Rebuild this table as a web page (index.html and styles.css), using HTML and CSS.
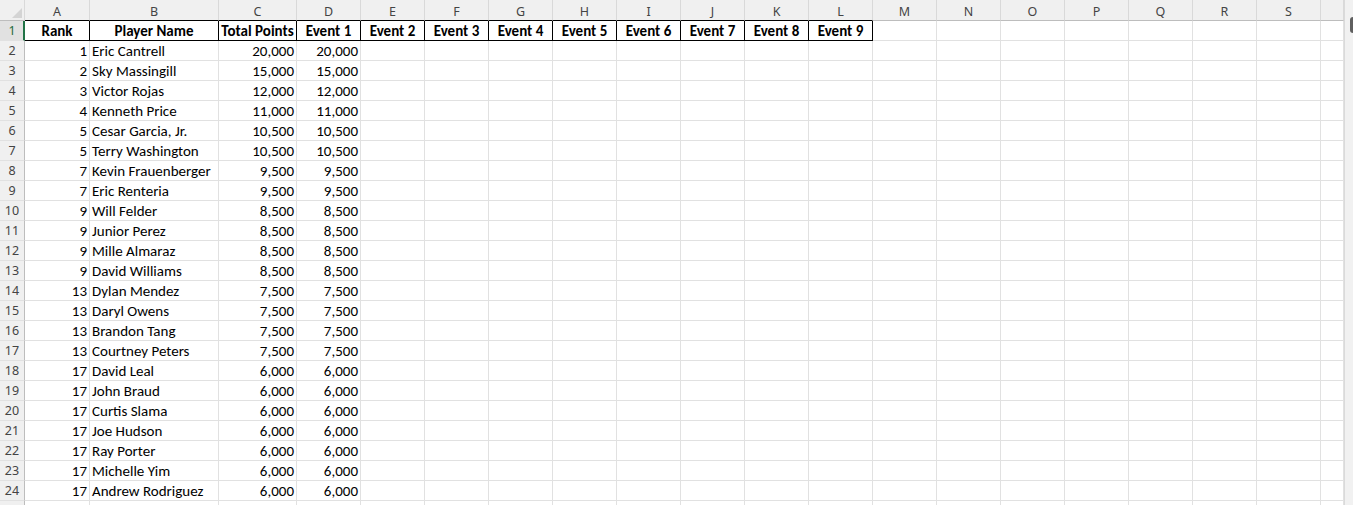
FILE: index.html
```html
<!DOCTYPE html>
<html>
<head>
<meta charset="utf-8">
<link rel="stylesheet" href="styles.css">
</head>
<body>
<div class="app">
  <div class="sheet">
    <div class="row hdr">
      <div class="corner"><svg width="12" height="12" viewBox="0 0 12 12"><polygon points="11,1 11,11 1,11" fill="#d4d4d4"/></svg></div>
      <div class="ch b1">A</div><div class="ch b1">B</div><div class="ch b1">C</div><div class="ch b1">D</div><div class="ch b1">E</div><div class="ch b1">F</div><div class="ch b1">G</div><div class="ch b1">H</div><div class="ch b1">I</div><div class="ch b1">J</div><div class="ch b1">K</div><div class="ch b1">L</div><div class="ch">M</div><div class="ch">N</div><div class="ch">O</div><div class="ch">P</div><div class="ch">Q</div><div class="ch">R</div><div class="ch">S</div><div class="ch"></div>
    </div>
    <div class="row">
      <div class="rh sel">1</div>
      <div class="c th">Rank</div><div class="c th">Player Name</div><div class="c th">Total Points</div><div class="c th">Event 1</div><div class="c th">Event 2</div><div class="c th">Event 3</div><div class="c th">Event 4</div><div class="c th">Event 5</div><div class="c th">Event 6</div><div class="c th">Event 7</div><div class="c th">Event 8</div><div class="c th">Event 9</div><i></i><i></i><i></i><i></i><i></i><i></i><i></i><i></i>
    </div>
    <div class="row"><div class="rh">2</div><div class="c n">1</div><div class="c">Eric Cantrell</div><div class="c n">20,000</div><div class="c n">20,000</div><i></i><i></i><i></i><i></i><i></i><i></i><i></i><i></i><i></i><i></i><i></i><i></i><i></i><i></i><i></i><i></i></div>
    <div class="row"><div class="rh">3</div><div class="c n">2</div><div class="c">Sky Massingill</div><div class="c n">15,000</div><div class="c n">15,000</div><i></i><i></i><i></i><i></i><i></i><i></i><i></i><i></i><i></i><i></i><i></i><i></i><i></i><i></i><i></i><i></i></div>
    <div class="row"><div class="rh">4</div><div class="c n">3</div><div class="c">Victor Rojas</div><div class="c n">12,000</div><div class="c n">12,000</div><i></i><i></i><i></i><i></i><i></i><i></i><i></i><i></i><i></i><i></i><i></i><i></i><i></i><i></i><i></i><i></i></div>
    <div class="row"><div class="rh">5</div><div class="c n">4</div><div class="c">Kenneth Price</div><div class="c n">11,000</div><div class="c n">11,000</div><i></i><i></i><i></i><i></i><i></i><i></i><i></i><i></i><i></i><i></i><i></i><i></i><i></i><i></i><i></i><i></i></div>
    <div class="row"><div class="rh">6</div><div class="c n">5</div><div class="c">Cesar Garcia, Jr.</div><div class="c n">10,500</div><div class="c n">10,500</div><i></i><i></i><i></i><i></i><i></i><i></i><i></i><i></i><i></i><i></i><i></i><i></i><i></i><i></i><i></i><i></i></div>
    <div class="row"><div class="rh">7</div><div class="c n">5</div><div class="c">Terry Washington</div><div class="c n">10,500</div><div class="c n">10,500</div><i></i><i></i><i></i><i></i><i></i><i></i><i></i><i></i><i></i><i></i><i></i><i></i><i></i><i></i><i></i><i></i></div>
    <div class="row"><div class="rh">8</div><div class="c n">7</div><div class="c">Kevin Frauenberger</div><div class="c n">9,500</div><div class="c n">9,500</div><i></i><i></i><i></i><i></i><i></i><i></i><i></i><i></i><i></i><i></i><i></i><i></i><i></i><i></i><i></i><i></i></div>
    <div class="row"><div class="rh">9</div><div class="c n">7</div><div class="c">Eric Renteria</div><div class="c n">9,500</div><div class="c n">9,500</div><i></i><i></i><i></i><i></i><i></i><i></i><i></i><i></i><i></i><i></i><i></i><i></i><i></i><i></i><i></i><i></i></div>
    <div class="row"><div class="rh">10</div><div class="c n">9</div><div class="c">Will Felder</div><div class="c n">8,500</div><div class="c n">8,500</div><i></i><i></i><i></i><i></i><i></i><i></i><i></i><i></i><i></i><i></i><i></i><i></i><i></i><i></i><i></i><i></i></div>
    <div class="row"><div class="rh">11</div><div class="c n">9</div><div class="c">Junior Perez</div><div class="c n">8,500</div><div class="c n">8,500</div><i></i><i></i><i></i><i></i><i></i><i></i><i></i><i></i><i></i><i></i><i></i><i></i><i></i><i></i><i></i><i></i></div>
    <div class="row"><div class="rh">12</div><div class="c n">9</div><div class="c">Mille Almaraz</div><div class="c n">8,500</div><div class="c n">8,500</div><i></i><i></i><i></i><i></i><i></i><i></i><i></i><i></i><i></i><i></i><i></i><i></i><i></i><i></i><i></i><i></i></div>
    <div class="row"><div class="rh">13</div><div class="c n">9</div><div class="c">David Williams</div><div class="c n">8,500</div><div class="c n">8,500</div><i></i><i></i><i></i><i></i><i></i><i></i><i></i><i></i><i></i><i></i><i></i><i></i><i></i><i></i><i></i><i></i></div>
    <div class="row"><div class="rh">14</div><div class="c n">13</div><div class="c">Dylan Mendez</div><div class="c n">7,500</div><div class="c n">7,500</div><i></i><i></i><i></i><i></i><i></i><i></i><i></i><i></i><i></i><i></i><i></i><i></i><i></i><i></i><i></i><i></i></div>
    <div class="row"><div class="rh">15</div><div class="c n">13</div><div class="c">Daryl Owens</div><div class="c n">7,500</div><div class="c n">7,500</div><i></i><i></i><i></i><i></i><i></i><i></i><i></i><i></i><i></i><i></i><i></i><i></i><i></i><i></i><i></i><i></i></div>
    <div class="row"><div class="rh">16</div><div class="c n">13</div><div class="c">Brandon Tang</div><div class="c n">7,500</div><div class="c n">7,500</div><i></i><i></i><i></i><i></i><i></i><i></i><i></i><i></i><i></i><i></i><i></i><i></i><i></i><i></i><i></i><i></i></div>
    <div class="row"><div class="rh">17</div><div class="c n">13</div><div class="c">Courtney Peters</div><div class="c n">7,500</div><div class="c n">7,500</div><i></i><i></i><i></i><i></i><i></i><i></i><i></i><i></i><i></i><i></i><i></i><i></i><i></i><i></i><i></i><i></i></div>
    <div class="row"><div class="rh">18</div><div class="c n">17</div><div class="c">David Leal</div><div class="c n">6,000</div><div class="c n">6,000</div><i></i><i></i><i></i><i></i><i></i><i></i><i></i><i></i><i></i><i></i><i></i><i></i><i></i><i></i><i></i><i></i></div>
    <div class="row"><div class="rh">19</div><div class="c n">17</div><div class="c">John Braud</div><div class="c n">6,000</div><div class="c n">6,000</div><i></i><i></i><i></i><i></i><i></i><i></i><i></i><i></i><i></i><i></i><i></i><i></i><i></i><i></i><i></i><i></i></div>
    <div class="row"><div class="rh">20</div><div class="c n">17</div><div class="c">Curtis Slama</div><div class="c n">6,000</div><div class="c n">6,000</div><i></i><i></i><i></i><i></i><i></i><i></i><i></i><i></i><i></i><i></i><i></i><i></i><i></i><i></i><i></i><i></i></div>
    <div class="row"><div class="rh">21</div><div class="c n">17</div><div class="c">Joe Hudson</div><div class="c n">6,000</div><div class="c n">6,000</div><i></i><i></i><i></i><i></i><i></i><i></i><i></i><i></i><i></i><i></i><i></i><i></i><i></i><i></i><i></i><i></i></div>
    <div class="row"><div class="rh">22</div><div class="c n">17</div><div class="c">Ray Porter</div><div class="c n">6,000</div><div class="c n">6,000</div><i></i><i></i><i></i><i></i><i></i><i></i><i></i><i></i><i></i><i></i><i></i><i></i><i></i><i></i><i></i><i></i></div>
    <div class="row"><div class="rh">23</div><div class="c n">17</div><div class="c">Michelle Yim</div><div class="c n">6,000</div><div class="c n">6,000</div><i></i><i></i><i></i><i></i><i></i><i></i><i></i><i></i><i></i><i></i><i></i><i></i><i></i><i></i><i></i><i></i></div>
    <div class="row"><div class="rh">24</div><div class="c n">17</div><div class="c">Andrew Rodriguez</div><div class="c n">6,000</div><div class="c n">6,000</div><i></i><i></i><i></i><i></i><i></i><i></i><i></i><i></i><i></i><i></i><i></i><i></i><i></i><i></i><i></i><i></i></div>
    <div class="row"><div class="rh"></div><div class="c"></div><div class="c"></div><div class="c"></div><div class="c"></div><i></i><i></i><i></i><i></i><i></i><i></i><i></i><i></i><i></i><i></i><i></i><i></i><i></i><i></i><i></i><i></i></div>
  </div>
  <div class="vscroll"><div class="thumb"></div></div>
</div>
</body>
</html>
```
FILE: styles.css
```css
html, body {
  margin: 0;
  padding: 0;
  background: #ffffff;
  overflow: hidden;
}
body {
  font-family: Carlito, Calibri, Lato, "Liberation Sans", sans-serif;
  font-size: 15px;
  color: #000;
}
.app {
  display: flex;
  height: 505px;
  overflow: hidden;
}
.sheet {
  width: 1344px;
  flex: none;
}
.row {
  display: grid;
  grid-template-columns: 25px 65px 129px 78px repeat(16, 64px) 23px;
  height: 20px;
}
.row > * {
  box-sizing: border-box;
  border-right: 1px solid #e1e1e1;
  border-bottom: 1px solid #e1e1e1;
  overflow: hidden;
  white-space: nowrap;
}
.row.hdr {
  height: 21px;
  background: #f0f0f0;
}
.row.hdr > * {
  border-right: 1px solid #d9d9d9;
  border-bottom: 1px solid #bdbdbd;
}
.corner {
  display: flex;
  align-items: flex-end;
  justify-content: flex-end;
}
.corner svg {
  display: block;
  margin: 0 1px 1px 0;
}
.ch {
  font-family: "Noto Sans", "Open Sans", sans-serif;
  font-size: 12.5px;
  color: #444;
  text-align: center;
  line-height: 20px;
  padding-top: 2px;
}
.row.hdr > .b1 {
  border-bottom-color: #000;
}
.rh {
  background: #f0f0f0;
  font-family: "Noto Sans", "Open Sans", sans-serif;
  font-size: 12.5px;
  color: #444;
  text-align: center;
  line-height: 20px;
  border-right-color: #bdbdbd !important;
}
.rh.sel {
  background: #e1e1e1;
  color: #1e6b3f;
  border-right: 2px solid #217346 !important;
  padding-left: 1px;
}
.c {
  padding: 0 2px 0 2px;
  line-height: 21px;
}
.c.n {
  text-align: right;
}
.c.th {
  font-weight: bold;
  text-align: center;
  padding: 0;
  border-right-color: #000;
  border-bottom-color: #000;
}
.vscroll {
  flex: 1;
  background: #f1f1f1;
  border-left: 1px solid #dadada;
  padding-top: 17px;
  padding-left: 5px;
}
.thumb {
  width: 8px;
  height: 16px;
  background: #5f5f5f;
  border-radius: 3px;
}
```
